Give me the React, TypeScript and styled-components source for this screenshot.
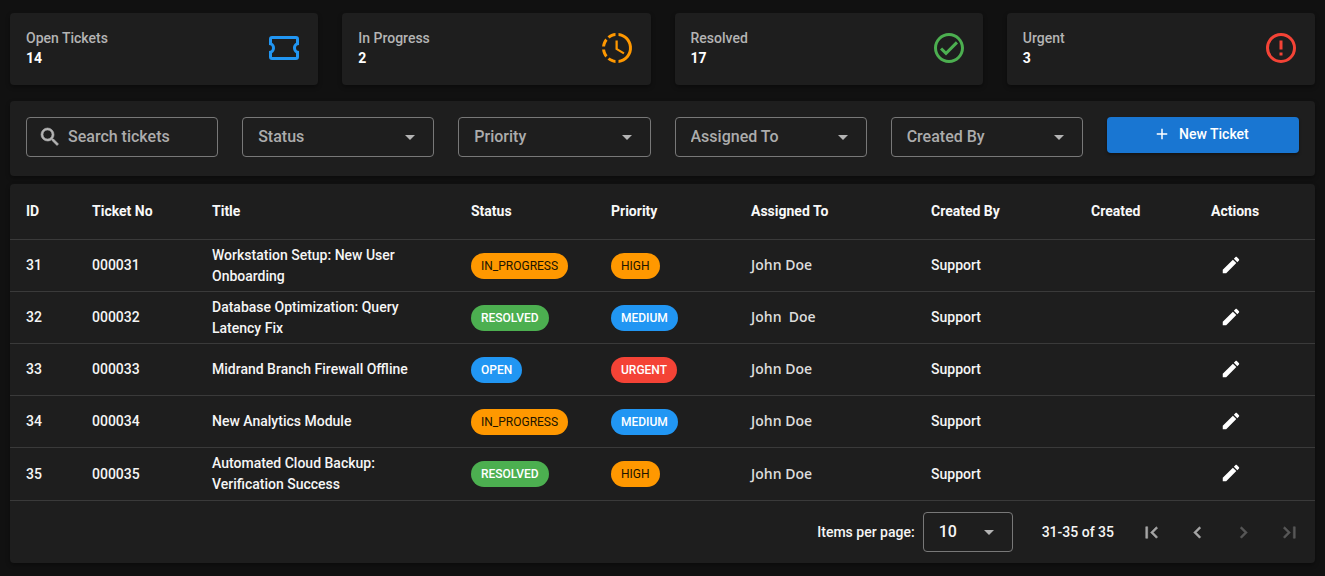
import React from 'react';
import styled, { createGlobalStyle } from 'styled-components';

const GlobalStyle = createGlobalStyle`
  * { box-sizing: border-box; }
  html { background: #111111; }
  body {
    margin: 0;
    color: #ffffff;
    font-family: Roboto, "Liberation Sans", sans-serif;
    font-size: 14px;
    line-height: 20px;
  }
  button, input, select { font-family: inherit; }
`;

const icons = {
  ticket:
    'M4,4A2,2 0 0,0 2,6V10A2,2 0 0,1 4,12A2,2 0 0,1 2,14V18A2,2 0 0,0 4,20H20A2,2 0 0,0 22,18V14A2,2 0 0,1 20,12A2,2 0 0,1 22,10V6A2,2 0 0,0 20,4H4M4,6H20V8.54C18.76,9.25 18,10.57 18,12C18,13.43 18.76,14.75 20,15.46V18H4V15.46C5.24,14.75 6,13.43 6,12C6,10.57 5.24,9.25 4,8.54V6Z',
  progress:
    'M13,2.03V2.05L13,4.05C17.39,4.59 20.5,8.58 19.96,12.97C19.5,16.61 16.64,19.5 13,19.93V21.93C18.5,21.38 22.5,16.5 21.95,11C21.5,6.25 17.73,2.5 13,2.03M11,2.06C9.05,2.25 7.19,3 5.67,4.26L7.1,5.74C8.22,4.84 9.57,4.26 11,4.06V2.06M4.26,5.67C3,7.19 2.25,9.04 2.05,11H4.05C4.24,9.58 4.8,8.23 5.69,7.1L4.26,5.67M2.06,13C2.26,14.96 3.03,16.81 4.27,18.33L5.69,16.9C4.81,15.77 4.24,14.42 4.06,13H2.06M7.1,18.37L5.67,19.74C7.18,21 9.04,21.79 11,22V20C9.58,19.82 8.23,19.25 7.1,18.37M12.5,7V12.25L17,14.92L16.25,16.15L11,13V7H12.5Z',
  check:
    'M12 2C6.5 2 2 6.5 2 12S6.5 22 12 22 22 17.5 22 12 17.5 2 12 2M12 20C7.59 20 4 16.41 4 12S7.59 4 12 4 20 7.59 20 12 16.41 20 12 20M16.59 7.58L10 14.17L7.41 11.59L6 13L10 17L18 9L16.59 7.58Z',
  alert:
    'M11,15H13V17H11V15M11,7H13V13H11V7M12,2C6.47,2 2,6.5 2,12A10,10 0 0,0 12,22A10,10 0 0,0 22,12A10,10 0 0,0 12,2M12,20A8,8 0 0,1 4,12A8,8 0 0,1 12,4A8,8 0 0,1 20,12A8,8 0 0,1 12,20Z',
  search:
    'M9.5,3A6.5,6.5 0 0,1 16,9.5C16,11.11 15.41,12.59 14.44,13.73L14.71,14H15.5L20.5,19L19,20.5L14,15.5V14.71L13.73,14.44C12.59,15.41 11.11,16 9.5,16A6.5,6.5 0 0,1 3,9.5A6.5,6.5 0 0,1 9.5,3M9.5,5C7,5 5,7 5,9.5C5,12 7,14 9.5,14C12,14 14,12 14,9.5C14,7 12,5 9.5,5Z',
  caret: 'M7,10L12,15L17,10H7Z',
  plus: 'M19,13H13V19H11V13H5V11H11V5H13V11H19V13Z',
  pencil:
    'M20.71,7.04C21.1,6.65 21.1,6 20.71,5.63L18.37,3.29C18,2.9 17.35,2.9 16.96,3.29L15.12,5.12L18.87,8.87M3,17.25V21H6.75L17.81,9.93L14.06,6.18L3,17.25Z',
  first: 'M18.41,16.59L13.82,12L18.41,7.41L17,6L11,12L17,18L18.41,16.59M6,6H8V18H6V6Z',
  prev: 'M15.41,16.58L10.83,12L15.41,7.41L14,6L8,12L14,18L15.41,16.58Z',
  next: 'M8.59,16.58L13.17,12L8.59,7.41L10,6L16,12L10,18L8.59,16.58Z',
  last: 'M5.59,7.41L10.18,12L5.59,16.59L7,18L13,12L7,6L5.59,7.41M16,6H18V18H16V6Z',
};

type IconName = keyof typeof icons;

interface IconProps {
  name: IconName;
  size?: number;
  color?: string;
  weight?: number;
}

function Icon({ name, size = 24, color = 'currentColor', weight = 0 }: IconProps) {
  return (
    <svg
      width={size}
      height={size}
      viewBox="0 0 24 24"
      fill={color}
      stroke={weight ? color : 'none'}
      strokeWidth={weight}
      aria-hidden="true"
    >
      <path d={icons[name]} />
    </svg>
  );
}

const Page = styled.main`
  display: flex;
  flex-direction: column;
  gap: 8px;
  padding: 13px 10px;
`;

const Surface = styled.section`
  background: #1e1e1e;
  border-radius: 4px;
  box-shadow: 0 2px 4px rgba(0, 0, 0, 0.35);
`;

const Stats = styled.div`
  display: grid;
  grid-template-columns: repeat(4, 1fr);
  gap: 24px;
  margin-bottom: 8px;
`;

const StatCard = styled(Surface)`
  display: flex;
  align-items: center;
  justify-content: space-between;
  height: 72px;
  padding: 0 16px 2px;
`;

const StatLabel = styled.div`
  color: #b4b4b4;
  font-weight: 500;
`;

const StatValue = styled.div`
  font-weight: 700;
`;

const Filters = styled(Surface)`
  display: grid;
  grid-template-columns: repeat(6, 1fr);
  align-items: start;
  gap: 24px;
  height: 75px;
  padding: 16px;
`;

const Field = styled.label`
  display: grid;
  align-items: center;
  height: 40px;
  border: 1px solid #787878;
  border-radius: 4px;
  color: #b4b4b4;
  svg { pointer-events: none; }
`;

const SearchField = styled(Field)`
  grid-template-columns: 24px 1fr;
  gap: 6px;
  padding: 0 11px;
`;

const SearchInput = styled.input`
  width: 100%;
  min-width: 0;
  padding: 0;
  border: 0;
  outline: 0;
  background: transparent;
  color: #ffffff;
  font-size: 16px;
  font-weight: 500;
  line-height: 24px;
  &::placeholder { color: #acacac; opacity: 1; }
`;

const SelectField = styled(Field)`
  grid-template-columns: 1fr 35px;
  svg { grid-area: 1 / 2; }
`;

const Select = styled.select<{ $strong?: boolean }>`
  grid-area: 1 / 1 / 2 / 3;
  width: 100%;
  height: 38px;
  padding: 0 36px 0 15px;
  border: 0;
  outline: 0;
  appearance: none;
  background: transparent;
  color: ${(p) => (p.$strong ? '#f5f5f5' : '#acacac')};
  font-size: 16px;
  font-weight: 500;
  line-height: 24px;
`;

const PrimaryButton = styled.button`
  display: flex;
  align-items: center;
  justify-content: center;
  gap: 8px;
  height: 36px;
  padding: 0 8px 2px 4px;
  border: 0;
  border-radius: 4px;
  background: #1976d2;
  color: #ffffff;
  font-size: 14px;
  font-weight: 500;
  box-shadow: 0 2px 3px rgba(0, 0, 0, 0.35);
`;

const Table = styled.table`
  width: 100%;
  table-layout: fixed;
  border-collapse: separate;
  border-spacing: 0;
`;

const HeadCell = styled.th<{ $width?: number }>`
  width: ${(p) => (p.$width ? `${p.$width}px` : 'auto')};
  height: 56px;
  padding: 0 16px 2px;
  border-bottom: 1px solid #3a3a3a;
  color: #f8f8f8;
  font-weight: 700;
  text-align: left;
`;

const Cell = styled.td`
  height: 52px;
  padding: 0 16px;
  border-bottom: 1px solid #3a3a3a;
  color: #f5f5f5;
  font-weight: 500;
  line-height: 21px;
  tr:last-child > & { height: 53px; }
`;

const PersonCell = styled(Cell)`
  padding-bottom: 2px;
  color: #dcdcdc;
  font-family: "Open Sans", "Noto Sans", sans-serif;
  font-weight: 600;
  white-space: pre;
`;

const ActionCell = styled(Cell)`
  padding-bottom: 2px;
`;

const chipColors: Record<string, string> = {
  IN_PROGRESS: '#ff9800',
  HIGH: '#ff9800',
  RESOLVED: '#4caf50',
  OPEN: '#2196f3',
  MEDIUM: '#2196f3',
  URGENT: '#f44336',
};

const Chip = styled.span<{ $tone: string }>`
  display: inline-flex;
  align-items: center;
  height: 26px;
  padding: 1px 10px 0;
  border-radius: 13px;
  background: ${(p) => chipColors[p.$tone]};
  color: ${(p) => (chipColors[p.$tone] === '#ff9800' ? '#201400' : '#ffffff')};
  font-size: 12px;
  font-weight: ${(p) => (chipColors[p.$tone] === '#ff9800' ? 400 : 500)};
  vertical-align: middle;
`;

const IconButton = styled.button`
  display: grid;
  place-items: center;
  width: 40px;
  height: 40px;
  padding: 0;
  border: 0;
  background: transparent;
  color: #ffffff;
`;

const PageButton = styled(IconButton)`
  width: 46px;
  color: #a6a6a6;
  &:disabled { color: #585858; }
`;

const Footer = styled.footer`
  display: flex;
  align-items: center;
  justify-content: flex-end;
  height: 62px;
  padding-right: 3px;
  color: #f5f5f5;
  font-weight: 500;
`;

const PageSize = styled(SelectField)`
  width: 90px;
  margin: 0 29px 0 8px;
`;

const Range = styled.span`
  margin-right: 14px;
`;

const stats: { label: string; value: number; icon: IconName; color: string }[] = [
  { label: 'Open Tickets', value: 14, icon: 'ticket', color: '#2196f3' },
  { label: 'In Progress', value: 2, icon: 'progress', color: '#ff9800' },
  { label: 'Resolved', value: 17, icon: 'check', color: '#4caf50' },
  { label: 'Urgent', value: 3, icon: 'alert', color: '#f44336' },
];

const filters = ['Status', 'Priority', 'Assigned To', 'Created By'];

const columns: { label: string; width?: number }[] = [
  { label: 'ID', width: 66 },
  { label: 'Ticket No', width: 120 },
  { label: 'Title' },
  { label: 'Status', width: 140 },
  { label: 'Priority', width: 140 },
  { label: 'Assigned To', width: 180 },
  { label: 'Created By', width: 160 },
  { label: 'Created', width: 120 },
  { label: 'Actions', width: 120 },
];

const tickets = [
  { id: 31, title: 'Workstation Setup: New User Onboarding', status: 'IN_PROGRESS', priority: 'HIGH', person: 'John Doe' },
  { id: 32, title: 'Database Optimization: Query Latency Fix', status: 'RESOLVED', priority: 'MEDIUM', person: 'John  Doe' },
  { id: 33, title: 'Midrand Branch Firewall Offline', status: 'OPEN', priority: 'URGENT', person: 'John Doe' },
  { id: 34, title: 'New Analytics Module', status: 'IN_PROGRESS', priority: 'MEDIUM', person: 'John Doe' },
  { id: 35, title: 'Automated Cloud Backup: Verification Success', status: 'RESOLVED', priority: 'HIGH', person: 'John Doe' },
];

export default function App() {
  return (
    <>
      <GlobalStyle />
      <Page>
        <Stats>
          {stats.map((s) => (
            <StatCard key={s.label}>
              <div>
                <StatLabel>{s.label}</StatLabel>
                <StatValue>{s.value}</StatValue>
              </div>
              <Icon name={s.icon} size={36} color={s.color} />
            </StatCard>
          ))}
        </Stats>

        <Filters>
          <SearchField>
            <Icon name="search" weight={0.6} />
            <SearchInput type="text" placeholder="Search tickets" aria-label="Search tickets" />
          </SearchField>
          {filters.map((f) => (
            <SelectField key={f}>
              <Select aria-label={f} defaultValue="">
                <option value="">{f}</option>
              </Select>
              <Icon name="caret" />
            </SelectField>
          ))}
          <PrimaryButton type="button">
            <Icon name="plus" size={18} />
            New Ticket
          </PrimaryButton>
        </Filters>

        <Surface>
          <Table>
            <thead>
              <tr>
                {columns.map((c) => (
                  <HeadCell key={c.label} $width={c.width} scope="col">
                    {c.label}
                  </HeadCell>
                ))}
              </tr>
            </thead>
            <tbody>
              {tickets.map((t) => (
                <tr key={t.id}>
                  <Cell>{t.id}</Cell>
                  <Cell>{`0000${t.id}`}</Cell>
                  <Cell>{t.title}</Cell>
                  <Cell>
                    <Chip $tone={t.status}>{t.status}</Chip>
                  </Cell>
                  <Cell>
                    <Chip $tone={t.priority}>{t.priority}</Chip>
                  </Cell>
                  <PersonCell>{t.person}</PersonCell>
                  <Cell>Support</Cell>
                  <Cell />
                  <ActionCell>
                    <IconButton type="button" aria-label={`Edit ticket ${t.id}`}>
                      <Icon name="pencil" size={22} />
                    </IconButton>
                  </ActionCell>
                </tr>
              ))}
            </tbody>
          </Table>
          <Footer>
            <label htmlFor="page-size">Items per page:</label>
            <PageSize as="div">
              <Select id="page-size" $strong defaultValue="10">
                <option value="10">10</option>
              </Select>
              <Icon name="caret" />
            </PageSize>
            <Range>31-35 of 35</Range>
            <PageButton type="button" aria-label="First page">
              <Icon name="first" size={23} weight={0.6} />
            </PageButton>
            <PageButton type="button" aria-label="Previous page">
              <Icon name="prev" size={23} weight={0.6} />
            </PageButton>
            <PageButton type="button" aria-label="Next page" disabled>
              <Icon name="next" size={23} weight={0.6} />
            </PageButton>
            <PageButton type="button" aria-label="Last page" disabled>
              <Icon name="last" size={23} weight={0.6} />
            </PageButton>
          </Footer>
        </Surface>
      </Page>
    </>
  );
}
